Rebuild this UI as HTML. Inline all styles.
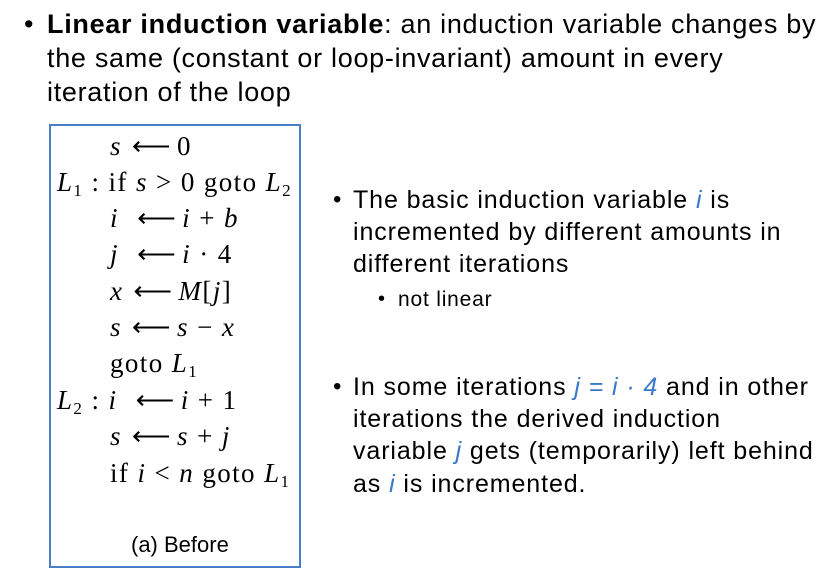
<!DOCTYPE html>
<html><head><meta charset="utf-8"><style>
body{margin:0;width:835px;height:575px;background:#fff;overflow:hidden;position:relative;font-family:"Liberation Sans",sans-serif;color:#000}
.a{position:absolute;white-space:nowrap}
.top{font-size:27px;left:47px;letter-spacing:0.7px}
.r{font-size:25px;left:353px;letter-spacing:0.9px}
.b{color:#3a78c9;font-style:italic}
.box{position:absolute;left:49px;top:124px;width:248px;height:440px;border:2px solid #4a7fc8}
.m{position:absolute;font-family:"Liberation Serif",serif;font-size:27px;white-space:nowrap;letter-spacing:1.4px}
.m i{font-style:italic}
.ar{display:inline-block;margin:0 5px 0 10px}
sub{font-size:17px;vertical-align:-5px;line-height:0}
</style></head><body>
<div class="a" style="left:24px;top:9px;font-size:27px">•</div>
<div class="a top" style="top:9px"><b>Linear induction variable</b>: an induction variable changes by</div>
<div class="a top" style="top:43px">the same (constant or loop-invariant) amount in every</div>
<div class="a top" style="top:77px">iteration of the loop</div>

<div class="box"></div>
<div class="m" style="left:110px;top:131px"><i>s</i><span class="ar">⟵</span>0</div>
<div class="m" style="left:57px;top:167px"><i>L</i><sub>1</sub> : if <i>s</i> &gt; 0 goto <i>L</i><sub>2</sub></div>
<div class="m" style="left:110px;top:203px"><i>i</i>&nbsp;<span class="ar">⟵</span><i>i</i> + <i>b</i></div>
<div class="m" style="left:110px;top:239px"><i>j</i>&nbsp;<span class="ar">⟵</span><i>i</i> · 4</div>
<div class="m" style="left:110px;top:276px"><i>x</i><span class="ar">⟵</span><i>M</i>[<i>j</i>]</div>
<div class="m" style="left:110px;top:312px"><i>s</i><span class="ar">⟵</span><i>s</i> − <i>x</i></div>
<div class="m" style="left:110px;top:348px">goto <i>L</i><sub>1</sub></div>
<div class="m" style="left:57px;top:385px"><i>L</i><sub>2</sub> : <i>i</i>&nbsp;<span class="ar">⟵</span><i>i</i> + 1</div>
<div class="m" style="left:110px;top:421px"><i>s</i><span class="ar">⟵</span><i>s</i> + <i>j</i></div>
<div class="m" style="left:110px;top:458px">if <i>i</i> &lt; <i>n</i> goto <i>L</i><sub>1</sub></div>
<div class="a" style="left:131px;top:532px;font-size:22px">(a) Before</div>

<div class="a" style="left:333px;top:186px;font-size:24px">•</div>
<div class="a r" style="top:186px">The basic induction variable <span class="b">i</span> is</div>
<div class="a r" style="top:218px">incremented by different amounts in</div>
<div class="a r" style="top:250px">different iterations</div>
<div class="a" style="left:378px;top:288px;font-size:20px">•</div>
<div class="a" style="left:398px;top:288px;font-size:21px;letter-spacing:0.8px">not linear</div>

<div class="a" style="left:333px;top:373px;font-size:24px">•</div>
<div class="a r" style="top:373px">In some iterations <span class="b">j = i · 4</span> and in other</div>
<div class="a r" style="top:405px">iterations the derived induction</div>
<div class="a r" style="top:437px">variable <span class="b">j</span> gets (temporarily) left behind</div>
<div class="a r" style="top:470px">as <span class="b">i</span> is incremented.</div>
</body></html>
